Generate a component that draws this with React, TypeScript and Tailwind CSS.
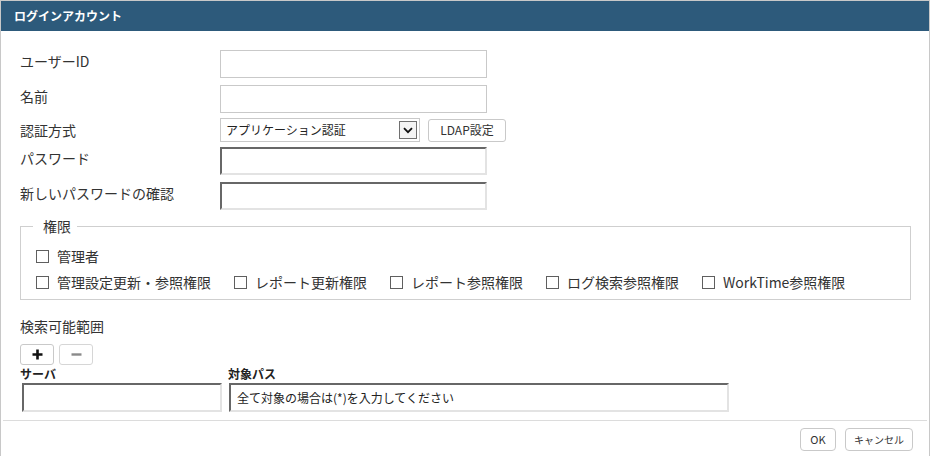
import React from "react";

const lightInput = "h-[28px] w-[267px] border border-[#c9c9c9] bg-white";
const insetInput =
  "border-2 border-t-[#676767] border-l-[#676767] border-b-[#e3e3e3] border-r-[#e3e3e3] bg-white";

function Check({ label, last }: { label: string; last?: boolean }) {
  return (
    <div className={"flex items-center h-[20px] " + (last ? "" : "mr-[23px]")}>
      <span className="w-[13px] h-[13px] border border-[#5f5f5f] bg-white shrink-0" />
      <span className="ml-[8px] text-[14px] leading-[20px] text-[#333]">{label}</span>
    </div>
  );
}

export default function App() {
  return (
    <div className="w-[930px] h-[462px] bg-white font-['Noto_Sans_CJK_JP','Noto_Sans',sans-serif] text-[#333]">
      <div className="w-[930px] h-[456px] border-t border-l border-r border-[#c8c8c8] flex flex-col">
        <div className="h-[30px] bg-[#2d5a7b] text-white text-[12px] font-bold pl-[13px] flex items-center leading-none">
          ログインアカウント
        </div>

        <div className="pl-[19px]">
          {/* row 1 */}
          <div className="flex items-start mt-[19px]">
            <div className="w-[200px] pt-px text-[14px] leading-[20px]">ユーザーID</div>
            <div className={lightInput} />
          </div>
          {/* row 2 */}
          <div className="flex items-start mt-[7px]">
            <div className="w-[200px] pt-px text-[14px] leading-[20px]">名前</div>
            <div className={lightInput} />
          </div>
          {/* row 3 */}
          <div className="flex items-center mt-[5px] h-[24px]">
            <div className="w-[200px] text-[14px] leading-[20px]">認証方式</div>
            <div className="w-[200px] h-[24px] border border-[#c9c9c9] bg-white flex items-center justify-between pl-[5px] pr-[2px]">
              <span className="text-[12px] leading-none text-[#222]">アプリケーション認証</span>
              <span className="w-[18px] h-[18px] border border-[#707070] bg-[#f4f4f4] flex items-center justify-center">
                <svg width="10" height="7" viewBox="0 0 10 7">
                  <path d="M1 1.2 L5 5.2 L9 1.2" fill="none" stroke="#111" strokeWidth="1.8" />
                </svg>
              </span>
            </div>
            <div className="ml-[8px] w-[78px] h-[23px] border border-[#c9c9c9] rounded-[3px] bg-white flex items-center justify-center text-[12px] leading-none text-[#333]">
              LDAP設定
            </div>
          </div>
          {/* row 4 */}
          <div className="flex items-start mt-[5px]">
            <div className="w-[200px] pt-px text-[14px] leading-[20px]">パスワード</div>
            <div className={"h-[28px] w-[267px] " + insetInput} />
          </div>
          {/* row 5 */}
          <div className="flex items-start mt-[7px]">
            <div className="w-[200px] pt-px text-[14px] leading-[20px]">新しいパスワードの確認</div>
            <div className={"h-[28px] w-[267px] " + insetInput} />
          </div>

          {/* 権限 */}
          <fieldset className="mt-[6px] w-[891px] border border-[#cfcfcf] p-0 m-0">
            <legend className="ml-[12px] pl-[10px] pr-[6px] text-[14px] leading-[20px]">権限</legend>
            <div className="pl-[15px] pt-[10px] pb-[7px] flex flex-col gap-[6px]">
              <div className="flex">
                <Check label="管理者" />
              </div>
              <div className="flex">
                <Check label="管理設定更新・参照権限" />
                <Check label="レポート更新権限" />
                <Check label="レポート参照権限" />
                <Check label="ログ検索参照権限" />
                <Check label="WorkTime参照権限" last />
              </div>
            </div>
          </fieldset>

          {/* 検索可能範囲 */}
          <div className="mt-[16px] text-[14px] leading-[20px]">検索可能範囲</div>
          <div className="flex mt-[8px] gap-[5px]">
            <div className="w-[34px] h-[21px] border border-[#c9c9c9] rounded-[3px] bg-white flex items-center justify-center">
              <svg width="11" height="11" viewBox="0 0 11 11">
                <path d="M5.5 0.5 V10.5 M0.5 5.5 H10.5" stroke="#111" strokeWidth="2.6" />
              </svg>
            </div>
            <div className="w-[34px] h-[21px] border border-[#d6d6d6] rounded-[3px] bg-white flex items-center justify-center">
              <svg width="11" height="11" viewBox="0 0 11 11">
                <path d="M0.5 5.5 H10.5" stroke="#8a8a8a" strokeWidth="2.4" />
              </svg>
            </div>
          </div>
          <div className="flex mt-[1px]">
            <div className="w-[208px]">
              <div className="text-[12px] font-bold leading-[16px] text-[#222]">サーバ</div>
              <div className={"mt-[1px] ml-[2px] h-[29px] w-[200px] " + insetInput} />
            </div>
            <div>
              <div className="text-[12px] font-bold leading-[16px] text-[#222]">対象パス</div>
              <div className={"mt-[1px] ml-[1px] h-[29px] w-[500px] flex items-center pl-[6px] text-[12px] text-[#222] " + insetInput}>
                全て対象の場合は(*)を入力してください
              </div>
            </div>
          </div>
        </div>

        <div className="mt-[8px] mx-[2px] h-px bg-[#dcdcdc]" />
        <div className="flex justify-end mt-[7px] pr-[16px] gap-[9px]">
          <div className="w-[36px] h-[23px] border border-[#c9c9c9] rounded-[4px] bg-white flex items-center justify-center text-[11px] leading-none text-[#333]">
            OK
          </div>
          <div className="w-[68px] h-[23px] border border-[#c9c9c9] rounded-[4px] bg-white flex items-center justify-center text-[10px] leading-none text-[#333]">
            キャンセル
          </div>
        </div>
      </div>
    </div>
  );
}
